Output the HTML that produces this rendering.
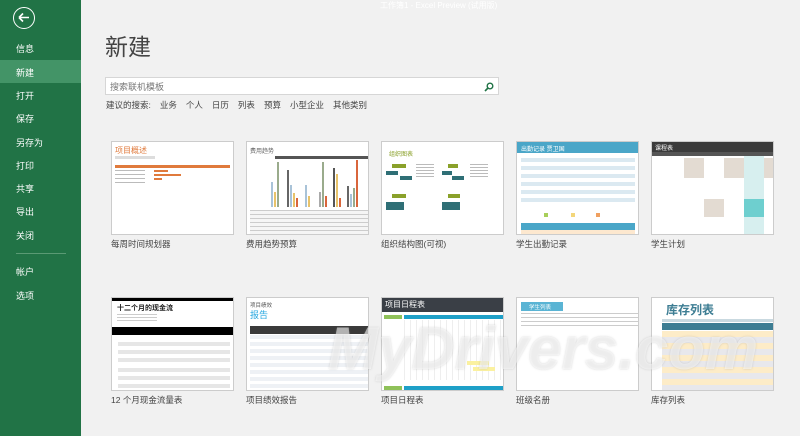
<!DOCTYPE html>
<html><head><meta charset="utf-8"><style>
*{margin:0;padding:0;box-sizing:border-box}
body{width:800px;height:436px;overflow:hidden;background:#f1f1f1;font-family:"Liberation Sans","Noto Sans CJK SC",sans-serif;position:relative;color:#444}
#side{position:absolute;left:0;top:0;width:81px;height:436px;background:#217346;color:#fff;font-size:9px}
#side .it{position:absolute;left:16px}
#sel{position:absolute;left:0;top:60px;width:81px;height:23px;background:#439467}
.back{position:absolute;left:13px;top:7px;width:22px;height:22px;border:1.5px solid #fff;border-radius:50%}
h1{position:absolute;left:105px;top:28px;font-size:23px;font-weight:normal;color:#444;font-family:"Noto Sans CJK SC",sans-serif}
#search{position:absolute;left:105px;top:77px;width:394px;height:18px;background:#fff;border:1px solid #d6d6d6;font-size:9px;color:#777;padding:2px 4px}
#sug{position:absolute;left:106px;top:99px;font-size:8.5px;color:#444;white-space:nowrap}
#sug span{margin-right:9px}
.th{position:absolute;width:123px;height:94px;background:#fff;border:1px solid #ccc;overflow:hidden}
.lb{position:absolute;font-size:8.5px;color:#444}
#wmw{position:absolute;left:320px;top:300px;width:480px;height:136px;overflow:hidden}
.wm{position:absolute;left:8px;top:14px;font-size:60px;font-style:italic;font-weight:bold;color:rgba(255,255,255,.55);text-shadow:0 0 2px rgba(140,140,140,.35);white-space:nowrap;font-family:"Liberation Sans",sans-serif}
.r{position:absolute}
</style></head><body>
<div id="side">
<div class="back"><svg width="20" height="20" viewBox="0 0 20 20" style="position:absolute;left:0;top:0"><path d="M5 9.5h10M5 9.5l4-4M5 9.5l4 4" stroke="#fff" stroke-width="1.6" fill="none"/></svg></div>
<div id="sel"></div>
<div class="it" style="top:42px">信息</div>
<div class="it" style="top:66px">新建</div>
<div class="it" style="top:89px">打开</div>
<div class="it" style="top:112px">保存</div>
<div class="it" style="top:136px">另存为</div>
<div class="it" style="top:159px">打印</div>
<div class="it" style="top:182px">共享</div>
<div class="it" style="top:205px">导出</div>
<div class="it" style="top:229px">关闭</div>
<div style="position:absolute;left:16px;top:253px;width:50px;height:1px;background:#5a9a74"></div>
<div class="it" style="top:265px">帐户</div>
<div class="it" style="top:289px">选项</div>
</div>
<div style="position:absolute;left:380px;top:0;font-size:8px;color:#fff">工作簿1 - Excel Preview (试用版)</div>
<h1>新建</h1>
<div id="search">搜索联机模板<svg width="10" height="10" viewBox="0 0 10 10" style="position:absolute;right:4px;top:4px"><circle cx="6" cy="4" r="2.8" stroke="#217346" stroke-width="1.4" fill="none"/><path d="M4 6L1 9" stroke="#217346" stroke-width="1.6"/></svg></div>
<div id="sug"><span>建议的搜索:</span><span>业务</span><span>个人</span><span>日历</span><span>列表</span><span>预算</span><span>小型企业</span><span>其他类别</span></div>

<!-- row1 -->
<div class="th" style="left:111px;top:141px">
<div class="r" style="left:3px;top:3px;font-size:8px;color:#e07a3c">项目概述</div>
<div class="r" style="left:3px;top:14px;width:40px;height:3px;background:#ddd"></div>
<div class="r" style="left:3px;top:23px;width:115px;height:3px;background:#e07a3c"></div>
<div class="r" style="left:42px;top:28px;width:14px;height:2px;background:#e07a3c"></div>
<div class="r" style="left:42px;top:32px;width:27px;height:2px;background:#e07a3c"></div>
<div class="r" style="left:42px;top:36px;width:8px;height:2px;background:#e07a3c"></div>
<div class="r" style="left:3px;top:28px;width:30px;height:13px;background:repeating-linear-gradient(#bbb 0 1px,#fff 1px 4px)"></div>
</div>
<div class="th" style="left:246px;top:141px">
<div class="r" style="left:3px;top:4px;font-size:6px;color:#666">费用趋势</div>
<div class="r" style="left:28px;top:14px;width:95px;height:3px;background:#555"></div>
<svg class="r" style="left:20px;top:18px" width="100" height="50"><g>
<rect x="4" y="22" width="2" height="25" fill="#a9c3d8"/><rect x="7" y="32" width="2" height="15" fill="#e8c36a"/><rect x="10" y="2" width="2" height="45" fill="#9aab8c"/>
<rect x="20" y="10" width="2" height="37" fill="#666"/><rect x="23" y="25" width="2" height="22" fill="#a9c3d8"/><rect x="26" y="33" width="2" height="14" fill="#e8c36a"/><rect x="29" y="38" width="2" height="9" fill="#d9663c"/>
<rect x="38" y="25" width="2" height="22" fill="#a9c3d8"/><rect x="41" y="36" width="2" height="11" fill="#e8c36a"/>
<rect x="52" y="32" width="2" height="15" fill="#aaa"/><rect x="55" y="2" width="2" height="45" fill="#9aab8c"/><rect x="58" y="36" width="2" height="11" fill="#d9663c"/>
<rect x="66" y="8" width="2" height="39" fill="#555"/><rect x="69" y="14" width="2" height="33" fill="#e8c36a"/><rect x="72" y="38" width="2" height="9" fill="#d9663c"/>
<rect x="80" y="26" width="2" height="21" fill="#666"/><rect x="83" y="34" width="2" height="13" fill="#a9c3d8"/><rect x="86" y="28" width="2" height="19" fill="#9aab8c"/><rect x="89" y="0" width="2" height="47" fill="#d9663c"/></g></svg>
<div class="r" style="left:3px;top:68px;width:118px;height:24px;background:repeating-linear-gradient(#ccc 0 1px,#f5f5f5 1px 4px)"></div>
</div>
<div class="th" style="left:381px;top:141px">
<div class="r" style="left:7px;top:7px;font-size:6px;color:#8aa12a">组织图表</div>
<div class="r" style="left:10px;top:22px;width:14px;height:4px;background:#8aa12a"></div>
<div class="r" style="left:4px;top:29px;width:12px;height:4px;background:#2f6f76"></div>
<div class="r" style="left:18px;top:34px;width:12px;height:4px;background:#2f6f76"></div>
<div class="r" style="left:66px;top:22px;width:10px;height:4px;background:#8aa12a"></div>
<div class="r" style="left:60px;top:29px;width:10px;height:4px;background:#2f6f76"></div>
<div class="r" style="left:70px;top:34px;width:12px;height:4px;background:#2f6f76"></div>
<div class="r" style="left:10px;top:52px;width:14px;height:4px;background:#8aa12a"></div>
<div class="r" style="left:4px;top:60px;width:18px;height:8px;background:#2f6f76"></div>
<div class="r" style="left:66px;top:52px;width:12px;height:4px;background:#8aa12a"></div>
<div class="r" style="left:60px;top:60px;width:18px;height:8px;background:#2f6f76"></div>
<div class="r" style="left:34px;top:22px;width:18px;height:14px;background:repeating-linear-gradient(#bbb 0 1px,#fff 1px 3px)"></div>
<div class="r" style="left:88px;top:22px;width:18px;height:14px;background:repeating-linear-gradient(#bbb 0 1px,#fff 1px 3px)"></div>
</div>
<div class="th" style="left:516px;top:141px">
<div class="r" style="left:0;top:0;width:123px;height:11px;background:#4aa6c8;color:#fff;font-size:6px;padding:2px 4px">出勤记录 贾卫国</div>
<div class="r" style="left:4px;top:16px;width:114px;height:48px;background:repeating-linear-gradient(#dbe9f1 0 4px,#fff 4px 8px)"></div>
<div class="r" style="left:27px;top:71px;width:4px;height:4px;background:#a8cf5a"></div>
<div class="r" style="left:54px;top:71px;width:4px;height:4px;background:#f3d67a"></div>
<div class="r" style="left:79px;top:71px;width:4px;height:4px;background:#f0a060"></div>
<div class="r" style="left:4px;top:81px;width:114px;height:13px;background:#4aa6c8"></div>
<div class="r" style="left:4px;top:88px;width:114px;height:6px;background:#fde8cf"></div>
</div>
<div class="th" style="left:651px;top:141px">
<div class="r" style="left:0;top:0;width:123px;height:10px;background:#3b3b3b;color:#fff;font-size:6px;padding:1px 3px">课程表</div>
<div class="r" style="left:0;top:10px;width:123px;height:4px;background:#555"></div>
<div class="r" style="left:32px;top:16px;width:20px;height:20px;background:#e3dbd2"></div>
<div class="r" style="left:72px;top:16px;width:20px;height:20px;background:#e3dbd2"></div>
<div class="r" style="left:92px;top:14px;width:20px;height:80px;background:#d7efef"></div>
<div class="r" style="left:112px;top:16px;width:11px;height:20px;background:#e3dbd2"></div>
<div class="r" style="left:52px;top:57px;width:20px;height:18px;background:#e3dbd2"></div>
<div class="r" style="left:92px;top:57px;width:20px;height:18px;background:#6ecfcf"></div>
</div>
<div class="lb" style="left:111px;top:238px">每周时间规划器</div>
<div class="lb" style="left:246px;top:238px">费用趋势预算</div>
<div class="lb" style="left:381px;top:238px">组织结构图(可视)</div>
<div class="lb" style="left:516px;top:238px">学生出勤记录</div>
<div class="lb" style="left:651px;top:238px">学生计划</div>

<!-- row2 -->
<div class="th" style="left:111px;top:297px">
<div class="r" style="left:0;top:0;width:123px;height:3px;background:#000"></div>
<div class="r" style="left:5px;top:5px;font-size:7px;font-weight:bold;color:#222">十二个月的现金流</div>
<div class="r" style="left:5px;top:16px;width:40px;height:8px;background:repeating-linear-gradient(#ccc 0 1px,#fff 1px 3px)"></div>
<div class="r" style="left:0;top:29px;width:123px;height:8px;background:#000"></div>
<div class="r" style="left:6px;top:44px;width:112px;height:20px;background:repeating-linear-gradient(#e6e6e6 0 4px,#fff 4px 8px)"></div>
<div class="r" style="left:6px;top:70px;width:112px;height:20px;background:repeating-linear-gradient(#e6e6e6 0 4px,#fff 4px 8px)"></div>
</div>
<div class="th" style="left:246px;top:297px">
<div class="r" style="left:3px;top:3px;font-size:5.5px;color:#555">项目绩效</div>
<div class="r" style="left:3px;top:10px;font-size:9px;color:#29a8e0">报告</div>
<div class="r" style="left:3px;top:28px;width:120px;height:8px;background:#3a3a3a"></div>
<div class="r" style="left:3px;top:37px;width:120px;height:57px;background:repeating-linear-gradient(#eef1f5 0 4px,#fff 4px 7px)"></div>
</div>
<div class="th" style="left:381px;top:297px">
<div class="r" style="left:0;top:0;width:123px;height:14px;background:#3a3f46;color:#fff;font-size:8px;padding:1px 3px">项目日程表</div>
<div class="r" style="left:2px;top:17px;width:18px;height:4px;background:#8fc159"></div>
<div class="r" style="left:22px;top:17px;width:101px;height:4px;background:#1ea0c8"></div>
<div class="r" style="left:22px;top:22px;width:101px;height:60px;background:repeating-linear-gradient(90deg,#eee 0 1px,#fff 1px 6px)"></div>
<div class="r" style="left:85px;top:63px;width:22px;height:4px;background:#fbf1a0"></div>
<div class="r" style="left:91px;top:69px;width:22px;height:4px;background:#fbf1a0"></div>
<div class="r" style="left:2px;top:88px;width:18px;height:4px;background:#8fc159"></div>
<div class="r" style="left:22px;top:88px;width:101px;height:4px;background:#1ea0c8"></div>
</div>
<div class="th" style="left:516px;top:297px">
<div class="r" style="left:4px;top:4px;width:42px;height:9px;background:#5ab4d4;color:#fff;font-size:5.5px;padding:1px 8px">学生列表</div>
<div class="r" style="left:4px;top:15px;width:119px;height:16px;background:repeating-linear-gradient(#ccc 0 1px,#fff 1px 4px)"></div>
</div>
<div class="th" style="left:651px;top:297px">
<div class="r" style="left:14px;top:3px;font-size:12px;color:#3d7d93;font-weight:bold">库存列表</div>
<div class="r" style="left:10px;top:21px;width:113px;height:3px;background:#c9d9e0"></div>
<div class="r" style="left:10px;top:25px;width:113px;height:7px;background:#3d7d93"></div>
<div class="r" style="left:10px;top:33px;width:113px;height:61px;background:repeating-linear-gradient(#fdecc8 0 6px,#e8e8ec 6px 12px)"></div>
</div>
<div class="lb" style="left:111px;top:394px">12 个月现金流量表</div>
<div class="lb" style="left:246px;top:394px">项目绩效报告</div>
<div class="lb" style="left:381px;top:394px">项目日程表</div>
<div class="lb" style="left:516px;top:394px">班级名册</div>
<div class="lb" style="left:651px;top:394px">库存列表</div>
<div id="wmw"><div class="wm">MyDrivers.com</div></div>
</body></html>
